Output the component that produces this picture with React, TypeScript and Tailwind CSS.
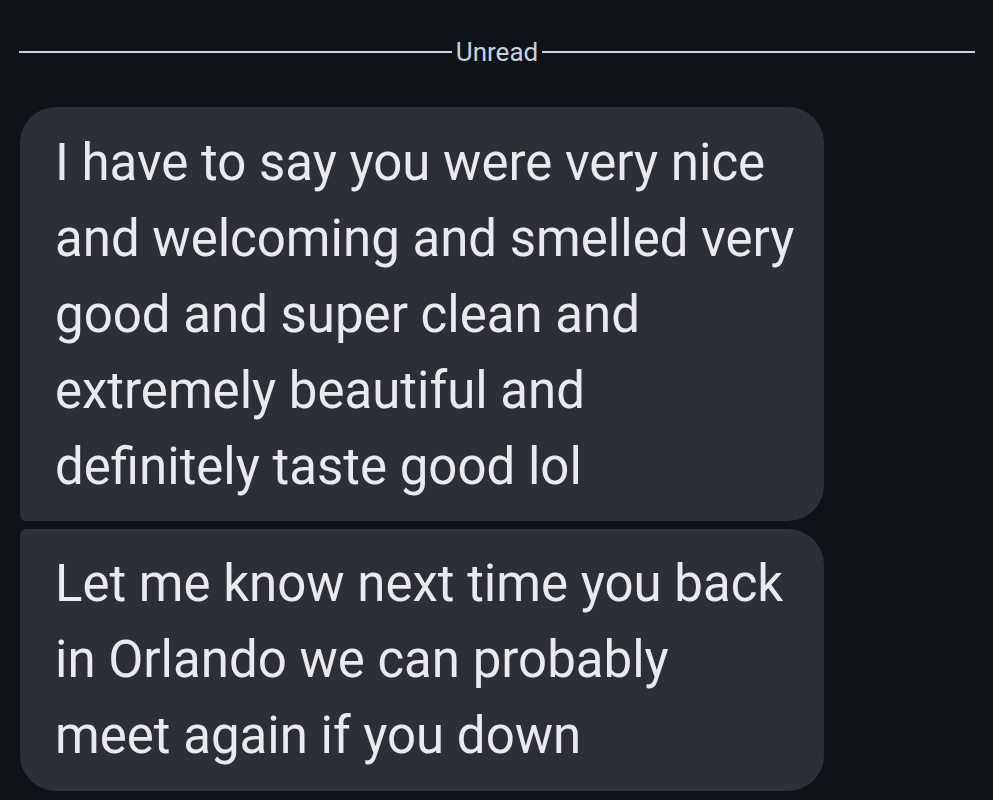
import React from "react";

const messages = [
  "I have to say you were very nice and welcoming and smelled very good and super clean and extremely beautiful and definitely taste good lol",
  "Let me know next time you back in Orlando we can probably meet again if you down",
];

const App: React.FC = () => {
  return (
    <div className="w-[993px] h-[800px] overflow-hidden bg-[#0f1216] font-['Roboto',sans-serif]">
      <div className="flex items-center pl-[19px] pr-[18px] pt-[35px] gap-[4px]">
        <div className="flex-1 h-[2px] bg-[#c9d3dd]" />
        <span className="text-[26px] leading-[34px] text-[#c5d2e0]">Unread</span>
        <div className="flex-1 h-[2px] bg-[#c9d3dd]" />
      </div>
      <div className="flex flex-col gap-[8px] pl-[20px] pt-[38px]">
        <div className="w-[804px] bg-[#2d2f36] rounded-[36px] rounded-bl-[6px] pl-[35px] pr-[29px] pt-[18px] pb-[16px]">
          <p className="text-[51px] leading-[76px] text-[#e8eaee]">{messages[0]}</p>
        </div>
        <div className="w-[804px] bg-[#2d2f36] rounded-[36px] rounded-tl-[6px] pl-[35px] pr-[29px] pt-[17px] pb-[17px]">
          <p className="text-[51px] leading-[76px] text-[#e8eaee]">{messages[1]}</p>
        </div>
      </div>
    </div>
  );
};

export default App;
